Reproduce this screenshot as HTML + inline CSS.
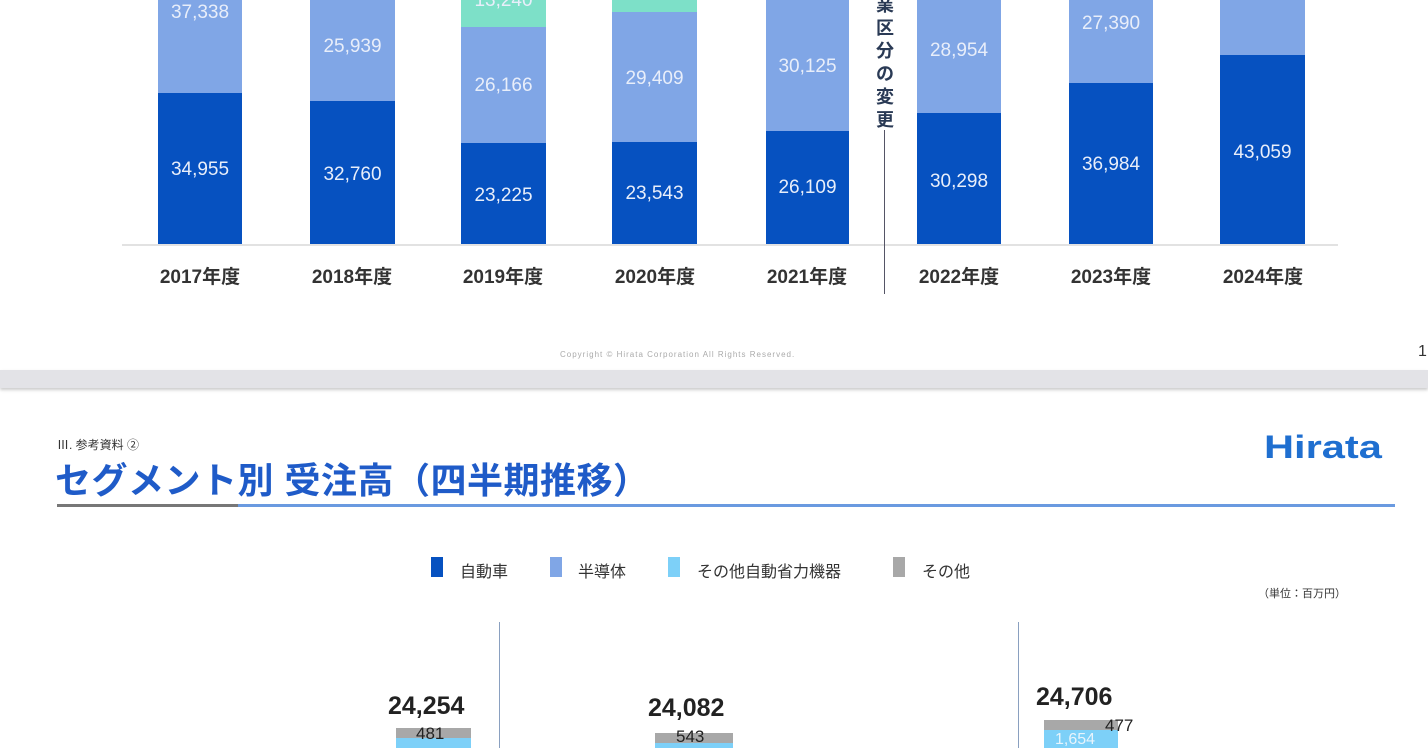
<!DOCTYPE html>
<html><head><meta charset="utf-8"><style>
*{margin:0;padding:0;box-sizing:border-box}
body{width:1428px;height:748px;overflow:hidden;background:#fff;position:relative;font-family:"Liberation Sans","Noto Sans CJK JP",sans-serif}
.a{position:absolute}
.d{background:#0651c0}.l{background:#80a6e6}.t{background:#7de0c8}
.v{position:absolute;width:100%;text-align:center;color:#e8eefa;font-size:19px}
.y{position:absolute;top:262px;font-size:19px;font-weight:bold;color:#333;width:120px;text-align:center}
</style></head><body>
<div class="a" style="left:122px;top:244px;width:1216px;height:2px;background:#e2e2e2"></div>
<div class="a l" style="left:158px;top:0;width:84px;height:93px"><div class="v" style="top:2px">37,338</div></div>
<div class="a d" style="left:158px;top:93px;width:84px;height:151px"><div class="v" style="top:66px">34,955</div></div>
<div class="a l" style="left:310px;top:0;width:85px;height:101px"><div class="v" style="top:36px">25,939</div></div>
<div class="a d" style="left:310px;top:101px;width:85px;height:143px"><div class="v" style="top:63px">32,760</div></div>
<div class="a t" style="left:461px;top:0;width:85px;height:27px"><div class="v" style="top:-10px">13,240</div></div>
<div class="a l" style="left:461px;top:27px;width:85px;height:116px"><div class="v" style="top:48px">26,166</div></div>
<div class="a d" style="left:461px;top:143px;width:85px;height:101px"><div class="v" style="top:42px">23,225</div></div>
<div class="a t" style="left:612px;top:0;width:85px;height:12px"></div>
<div class="a l" style="left:612px;top:12px;width:85px;height:130px"><div class="v" style="top:56px">29,409</div></div>
<div class="a d" style="left:612px;top:142px;width:85px;height:102px"><div class="v" style="top:41px">23,543</div></div>
<div class="a l" style="left:766px;top:0;width:83px;height:131px"><div class="v" style="top:56px">30,125</div></div>
<div class="a d" style="left:766px;top:131px;width:83px;height:113px"><div class="v" style="top:46px">26,109</div></div>
<div class="a l" style="left:917px;top:0;width:84px;height:113px"><div class="v" style="top:40px">28,954</div></div>
<div class="a d" style="left:917px;top:113px;width:84px;height:131px"><div class="v" style="top:58px">30,298</div></div>
<div class="a l" style="left:1069px;top:0;width:84px;height:83px"><div class="v" style="top:13px">27,390</div></div>
<div class="a d" style="left:1069px;top:83px;width:84px;height:161px"><div class="v" style="top:71px">36,984</div></div>
<div class="a l" style="left:1220px;top:0;width:85px;height:55px"></div>
<div class="a d" style="left:1220px;top:55px;width:85px;height:189px"><div class="v" style="top:87px">43,059</div></div>
<div class="a" style="left:875px;top:-6px;width:20px;font-size:18px;font-weight:bold;color:#2a3a55;line-height:23px;text-align:center">業<br>区<br>分<br>の<br>変<br>更</div>
<div class="a" style="left:884px;top:130px;width:1px;height:164px;background:#556"></div>
<div class="y" style="left:140px">2017年度</div>
<div class="y" style="left:292px">2018年度</div>
<div class="y" style="left:443px">2019年度</div>
<div class="y" style="left:595px">2020年度</div>
<div class="y" style="left:747px">2021年度</div>
<div class="y" style="left:899px">2022年度</div>
<div class="y" style="left:1051px">2023年度</div>
<div class="y" style="left:1203px">2024年度</div>
<div class="a" style="left:560px;top:350px;font-size:8px;color:#aaa;letter-spacing:1px">Copyright © Hirata Corporation All Rights Reserved.</div>
<div class="a" style="left:1418px;top:343px;font-size:16px;color:#333">1</div>
<div class="a" style="left:0;top:370px;width:1428px;height:18px;background:#e3e3e7;box-shadow:0 2px 3px #ccc"></div>
<div class="a" style="left:57px;top:436px;font-size:12px;color:#333">Ⅲ. 参考資料 ②</div>
<div class="a" style="left:55px;top:459px;font-size:36px;line-height:44px;color:#1f5bc8;font-weight:bold;letter-spacing:0.5px">セグメント別 受注高（四半期推移）</div>
<div class="a" style="left:57px;top:504px;width:1338px;height:3px;background:#6a9ae0"></div>
<div class="a" style="left:57px;top:504px;width:181px;height:3px;background:#777"></div>
<div class="a" style="left:1264px;top:429px;font-size:32px;font-weight:bold;color:#1f6fd0;transform:scaleX(1.3);transform-origin:left top">Hirata</div>
<div class="a" style="left:431px;top:557px;width:12px;height:20px;background:#0651c0"></div>
<div class="a" style="left:460px;top:558px;font-size:16px;color:#333">自動車</div>
<div class="a" style="left:550px;top:557px;width:12px;height:20px;background:#80a6e6"></div>
<div class="a" style="left:578px;top:558px;font-size:16px;color:#333">半導体</div>
<div class="a" style="left:668px;top:557px;width:12px;height:20px;background:#7dd0f8"></div>
<div class="a" style="left:697px;top:558px;font-size:16px;color:#333">その他自動省力機器</div>
<div class="a" style="left:893px;top:557px;width:12px;height:20px;background:#a8a8a8"></div>
<div class="a" style="left:922px;top:558px;font-size:16px;color:#333">その他</div>
<div class="a" style="left:1258px;top:585px;font-size:11px;color:#333">（単位：百万円）</div>
<div class="a" style="left:499px;top:622px;width:1px;height:126px;background:#8aa0c0"></div>
<div class="a" style="left:1018px;top:622px;width:1px;height:126px;background:#8aa0c0"></div>
<div class="a" style="left:388px;top:692px;font-size:25px;font-weight:bold;color:#222">24,254</div>
<div class="a" style="left:396px;top:728px;width:75px;height:10px;background:#a8a8a8"></div>
<div class="a" style="left:396px;top:738px;width:75px;height:10px;background:#7dd0f8"></div>
<div class="a" style="left:416px;top:724px;font-size:17px;color:#222">481</div>
<div class="a" style="left:648px;top:694px;font-size:25px;font-weight:bold;color:#222">24,082</div>
<div class="a" style="left:655px;top:733px;width:78px;height:10px;background:#a8a8a8"></div>
<div class="a" style="left:655px;top:743px;width:78px;height:5px;background:#7dd0f8"></div>
<div class="a" style="left:676px;top:727px;font-size:17px;color:#222">543</div>
<div class="a" style="left:1036px;top:683px;font-size:25px;font-weight:bold;color:#222">24,706</div>
<div class="a" style="left:1044px;top:720px;width:74px;height:10px;background:#a8a8a8"></div>
<div class="a" style="left:1044px;top:730px;width:74px;height:18px;background:#7dd0f8"></div>
<div class="a" style="left:1105px;top:716px;font-size:17px;color:#222">477</div>
<div class="a" style="left:1055px;top:731px;font-size:16px;color:#e8f4fc">1,654</div>
</body></html>
